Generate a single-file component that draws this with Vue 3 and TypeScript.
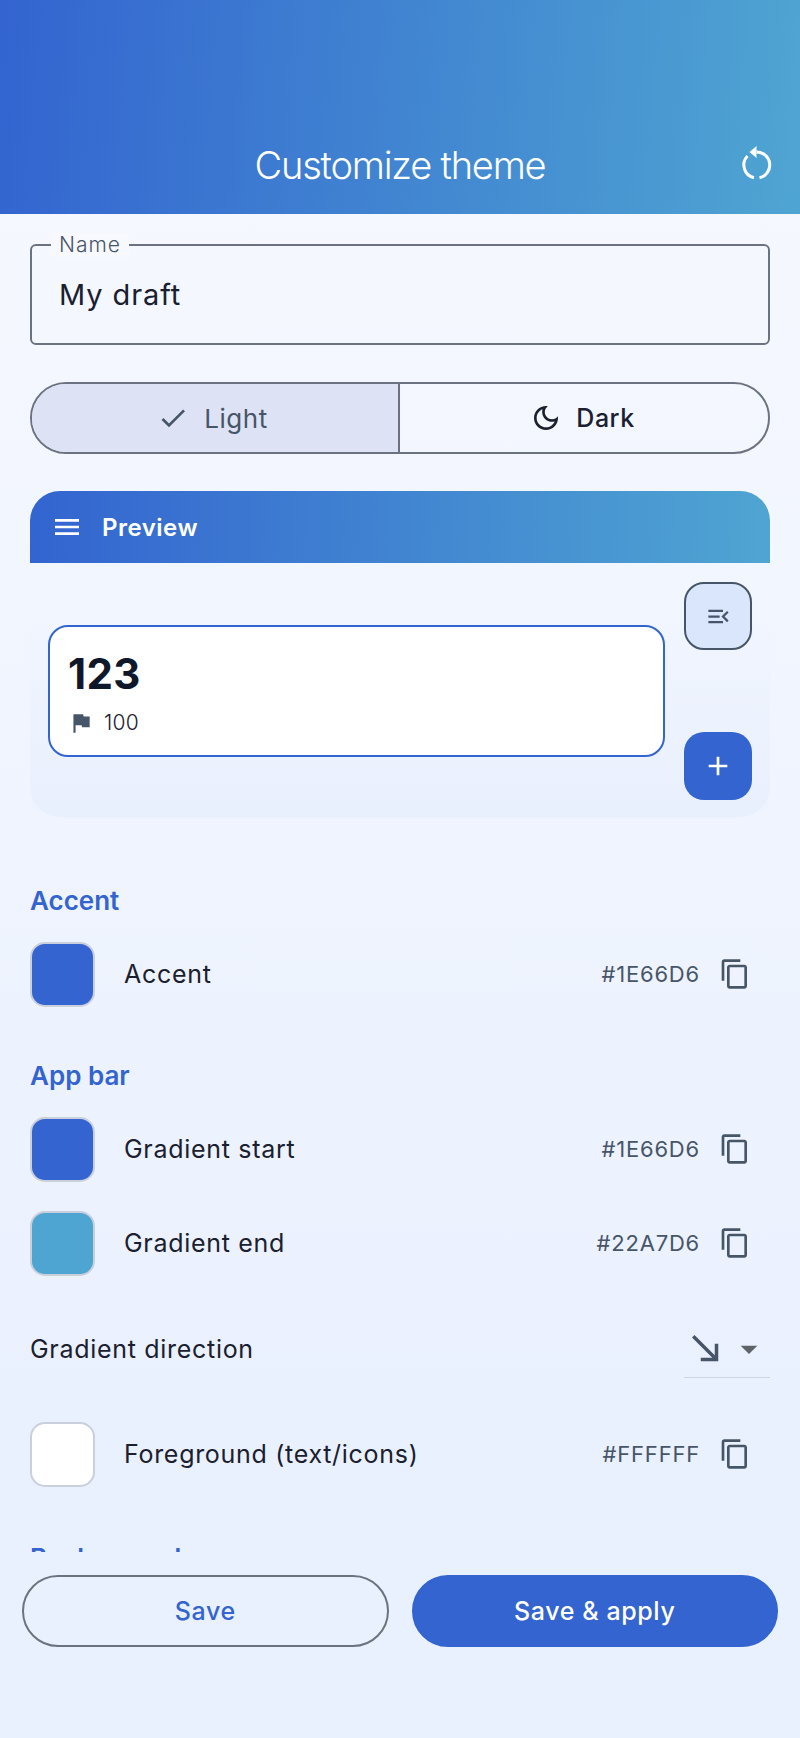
<script setup lang="ts">
interface ColorRow {
  label: string
  hex: string
  color: string
}

const accentRows: ColorRow[] = [{ label: 'Accent', hex: '#1E66D6', color: '#3364d0' }]
const gradientRows: ColorRow[] = [
  { label: 'Gradient start', hex: '#1E66D6', color: '#3364d0' },
  { label: 'Gradient end', hex: '#22A7D6', color: '#4fa5d2' },
]
const foreground: ColorRow = { label: 'Foreground (text/icons)', hex: '#FFFFFF', color: '#ffffff' }

const copyPath =
  'M16 1H4c-1.1 0-2 .9-2 2v14h2V3h12V1zm3 4H8c-1.1 0-2 .9-2 2v14c0 1.1.9 2 2 2h11c1.1 0 2-.9 2-2V7c0-1.1-.9-2-2-2zm0 16H8V7h11v14z'
</script>

<template>
  <div class="page">
    <header class="appbar">
      <h1 class="title">Customize theme</h1>
      <svg class="reset" viewBox="0 0 32 40" width="32" height="40" fill="none" stroke="#fff" stroke-width="3">
        <path d="M16.5 7 A13 13 0 0 1 19.5 32.7" />
        <path d="M14 32.7 A13 13 0 0 1 7.5 11" />
        <path d="M9.5 7 L16.5 1 L16.5 13 Z" fill="#fff" stroke="none" />
      </svg>
    </header>

    <main class="scroll">
      <div class="field">
        <span class="field-label">Name</span>
        <span class="field-value">My draft</span>
      </div>

      <div class="segments">
        <div class="segment selected">
          <svg viewBox="0 0 24 24" width="32" height="32" class="seg-icon"><path d="M9 16.17L4.83 12l-1.42 1.41L9 19 21 7l-1.41-1.41z" /></svg>
          <span>Light</span>
        </div>
        <div class="segment">
          <svg viewBox="0 0 24 24" width="32" height="32" class="seg-icon dark">
            <path d="M9.37,5.51C9.19,6.15,9.1,6.82,9.1,7.5c0,4.08,3.32,7.4,7.4,7.4c0.68,0,1.35-0.09,1.99-0.27C17.45,17.19,14.93,19,12,19c-3.86,0-7-3.14-7-7C5,9.07,6.81,6.55,9.37,5.51z M12,3c-4.97,0-9,4.03-9,9s4.03,9,9,9s9-4.03,9-9c0-0.46-0.04-0.92-0.1-1.36c-0.98,1.37-2.58,2.26-4.4,2.26c-2.98,0-5.4-2.42-5.4-5.4c0-1.81,0.89-3.42,2.26-4.4C12.92,3.04,12.46,3,12,3L12,3z" />
          </svg>
          <span class="dark-text">Dark</span>
        </div>
      </div>

      <section class="preview">
        <div class="preview-bar">
          <svg viewBox="0 0 24 24" width="32" height="32" fill="#fff"><path d="M3 18h18v-2H3v2zm0-5h18v-2H3v2zm0-7v2h18V6H3z" /></svg>
          <span>Preview</span>
        </div>
        <div class="preview-body">
          <div class="task-card">
            <div class="task-title">123</div>
            <div class="task-meta">
              <svg viewBox="0 0 24 24" width="26" height="26" fill="#475569"><path d="M14.4 6L14 4H5v17h2v-7h5.6l.4 2h7V6z" /></svg>
              <span>100</span>
            </div>
          </div>
          <div class="preview-actions">
            <div class="fab outlined">
              <svg viewBox="0 0 24 24" width="27" height="27" fill="#475569"><path d="M3 18h13v-2H3v2zm0-5h10v-2H3v2zm0-7v2h13V6H3zm18 9.59L17.42 12 21 8.41 19.59 7l-5 5 5 5L21 15.59z" /></svg>
            </div>
            <div class="fab filled">
              <svg viewBox="0 0 24 24" width="32" height="32" fill="#fff"><path d="M19 13h-6v6h-2v-6H5v-2h6V5h2v6h6v2z" /></svg>
            </div>
          </div>
        </div>
      </section>

      <h2 class="group first">Accent</h2>
      <div class="rows">
        <div v-for="row in accentRows" :key="row.label" class="color-row">
          <div class="swatch" :style="{ background: row.color }"></div>
          <span class="row-label">{{ row.label }}</span>
          <span class="hex">{{ row.hex }}</span>
          <svg viewBox="0 0 24 24" width="32" height="32" class="copy"><path :d="copyPath" /></svg>
        </div>
      </div>

      <h2 class="group second">App bar</h2>
      <div class="rows">
        <div v-for="row in gradientRows" :key="row.label" class="color-row">
          <div class="swatch" :style="{ background: row.color }"></div>
          <span class="row-label">{{ row.label }}</span>
          <span class="hex">{{ row.hex }}</span>
          <svg viewBox="0 0 24 24" width="32" height="32" class="copy"><path :d="copyPath" /></svg>
        </div>
      </div>

      <div class="direction">
        <span class="row-label">Gradient direction</span>
        <div class="dropdown">
          <svg viewBox="0 0 24 24" width="42" height="42" fill="#475569"><path d="M19 9h-2v6.59L5.41 4 4 5.41 15.59 17H9v2h10V9z" /></svg>
          <svg viewBox="0 0 24 24" width="40" height="40" fill="#5f6368"><path d="M7 10l5 5 5-5z" /></svg>
        </div>
      </div>

      <div class="color-row">
        <div class="swatch" :style="{ background: foreground.color }"></div>
        <span class="row-label">{{ foreground.label }}</span>
        <span class="hex">{{ foreground.hex }}</span>
        <svg viewBox="0 0 24 24" width="32" height="32" class="copy"><path :d="copyPath" /></svg>
      </div>

      <h2 class="group last">Background</h2>
    </main>

    <footer class="footer">
      <button class="btn ghost">Save</button>
      <button class="btn solid">Save &amp; apply</button>
    </footer>
  </div>
</template>

<style scoped>
.page {
  width: 800px;
  height: 1738px;
  display: flex;
  flex-direction: column;
  overflow: hidden;
  background: linear-gradient(180deg, #f7f9ff 0%, #eaf1fe 80%, #eaf1fe 100%);
  font-family: Inter, "Noto Sans", sans-serif;
  color: #1a2030;
}

.appbar {
  height: 214px;
  flex: none;
  position: relative;
  display: flex;
  align-items: flex-end;
  justify-content: center;
  padding-bottom: 27px;
  box-sizing: border-box;
  background: linear-gradient(95deg, #3364d0 0%, #4fa5d2 100%);
}
.title {
  margin: 0;
  font-size: 38px;
  line-height: 44px;
  font-weight: 300;
  letter-spacing: -1.2px;
  color: #fff;
}
.reset {
  position: absolute;
  left: 740px;
  top: 145px;
}

.scroll {
  height: 1338px;
  flex: none;
  overflow: hidden;
  padding: 30px 30px 0;
  box-sizing: border-box;
}

.field {
  position: relative;
  height: 101px;
  box-sizing: border-box;
  border: 2px solid #6b7280;
  border-radius: 6px;
  padding: 0 27px;
  display: flex;
  align-items: center;
}
.field-label {
  position: absolute;
  top: -13px;
  left: 19px;
  padding: 0 8px;
  background: #f7f9ff;
  font-size: 21px;
  line-height: 24px;
  font-weight: 300;
  letter-spacing: 1px;
  color: #475569;
}
.field-value {
  font-size: 29px;
  letter-spacing: 0.9px;
}

.segments {
  margin-top: 37px;
  height: 72px;
  box-sizing: border-box;
  border: 2px solid #6b7280;
  border-radius: 36px;
  display: grid;
  grid-template-columns: 1fr 1fr;
  overflow: hidden;
}
.segment {
  display: flex;
  align-items: center;
  justify-content: center;
  gap: 14px;
  font-size: 25px;
  letter-spacing: 0.5px;
}
.segment.selected {
  background: #dde3f5;
  border-right: 2px solid #6b7280;
  color: #475569;
  font-size: 26px;
  gap: 15px;
  padding-right: 5px;
}
.seg-icon {
  fill: #475569;
}
.seg-icon.dark {
  fill: #1a2030;
  margin-left: -3px;
}
.dark-text {
  font-weight: 500;
}

.preview {
  margin-top: 37px;
}
.preview-bar {
  height: 72px;
  display: flex;
  align-items: center;
  gap: 19px;
  padding-left: 21px;
  border-radius: 30px 30px 0 0;
  background: linear-gradient(92deg, #3364d0 0%, #4fa5d2 100%);
  color: #fff;
  font-size: 24px;
  font-weight: 600;
  letter-spacing: 0.5px;
}
.preview-body {
  height: 254px;
  box-sizing: border-box;
  padding: 19px 18px 17px;
  display: flex;
  gap: 19px;
  border-radius: 0 0 30px 30px;
  background: linear-gradient(180deg, rgba(232, 240, 253, 0) 20%, #e9f0fd 100%);
}
.task-card {
  flex: 1;
  align-self: center;
  height: 132px;
  margin-top: -1px;
  box-sizing: border-box;
  background: #fff;
  border: 2px solid #3364d0;
  border-radius: 20px;
  padding: 24px 18px 0;
}
.task-title {
  font-size: 42px;
  line-height: 46px;
  font-weight: 700;
  color: #0f172a;
  letter-spacing: 0.4px;
}
.task-meta {
  display: flex;
  align-items: center;
  gap: 10px;
  margin-top: 13px;
  font-size: 21px;
  font-weight: 300;
  letter-spacing: 0.3px;
  color: #1a2030;
}
.preview-actions {
  width: 68px;
  display: flex;
  flex-direction: column;
  justify-content: space-between;
}
.fab {
  width: 68px;
  height: 68px;
  box-sizing: border-box;
  border-radius: 20px;
  display: flex;
  align-items: center;
  justify-content: center;
}
.fab.outlined {
  background: #d9e6fb;
  border: 2px solid #475569;
}
.fab.filled {
  background: #3364d0;
}

.group {
  margin: 0;
  font-size: 26px;
  line-height: 30px;
  font-weight: 600;
  color: #3364d0;
}
.group.first {
  margin-top: 69px;
}
.group.second {
  margin-top: 40px;
}
.group.last {
  margin-top: 42px;
}

.rows {
  display: flex;
  flex-direction: column;
  margin-top: 11px;
}
.color-row {
  height: 94px;
  display: flex;
  align-items: center;
}
.swatch {
  width: 65px;
  height: 65px;
  box-sizing: border-box;
  border: 2px solid #c9cfdc;
  border-radius: 15px;
  flex: none;
}
.row-label {
  font-size: 25px;
  letter-spacing: 0.7px;
  color: #1a2030;
}
.swatch + .row-label {
  margin-left: 29px;
}
.hex {
  margin-left: auto;
  font-size: 22px;
  letter-spacing: 0.8px;
  color: #475569;
}
.copy {
  margin-left: 19px;
  margin-right: 19px;
  fill: #475569;
}

.direction {
  display: flex;
  align-items: center;
  justify-content: space-between;
  height: 72px;
  margin-top: 23px;
  margin-bottom: 22px;
}
.dropdown {
  width: 86px;
  height: 58px;
  box-sizing: border-box;
  border-bottom: 1px solid #cfd6e2;
  display: flex;
  align-items: center;
  justify-content: flex-end;
  gap: 2px;
  padding-right: 1px;
}

.footer {
  flex: none;
  display: flex;
  gap: 23px;
  padding: 23px 22px 0;
}
.btn {
  flex: 1;
  height: 72px;
  padding: 0;
  box-sizing: border-box;
  border-radius: 36px;
  font-family: inherit;
  font-size: 25px;
  font-weight: 450;
  letter-spacing: 0.6px;
}
.btn.ghost {
  background: transparent;
  border: 2px solid #6b7280;
  color: #3364d0;
}
.btn.solid {
  background: #3364d0;
  border: 2px solid #3364d0;
  color: #fff;
}
</style>
